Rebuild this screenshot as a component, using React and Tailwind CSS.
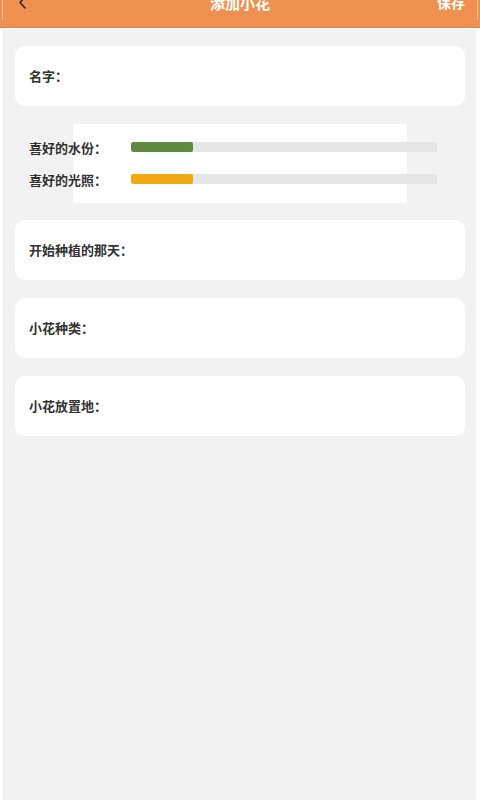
import React from "react";

const font = { fontFamily: '"Noto Sans CJK SC", "Noto Sans", sans-serif' };

function Card({ label }) {
  return (
    <div className="h-[60px] rounded-[10px] bg-white flex items-center pl-[14px]">
      <span className="text-[13px] font-semibold text-[#333333] leading-none -mt-[1px]">{label}</span>
    </div>
  );
}

function BarRow({ label, color }) {
  return (
    <div className="relative flex items-center h-[20px]">
      <span className="w-[102px] shrink-0 text-[13px] font-semibold text-[#333333] leading-none">{label}</span>
      <div className="flex-1 h-[10px] rounded-[2px] bg-[#e6e6e6] overflow-hidden">
        <div className={`h-full w-[62px] rounded-[2px] ${color}`} />
      </div>
    </div>
  );
}

export default function App() {
  return (
    <div className="min-h-[800px] bg-white flex flex-col" style={font}>
      <header className="h-[28px] bg-[#ee9150] border-b border-[#e6833e] overflow-hidden">
        <div className="mx-[2px] h-full border-x border-[#f6c29c] relative">
          <div className="-mt-[7px] h-[18px] flex items-center justify-between pl-[14px] pr-[12px]">
            <svg width="12" height="14" viewBox="0 0 12 14" fill="none" className="mt-[2px]">
              <path d="M8 1 L3 6.5 L8 12" stroke="#2b2b2b" strokeWidth="1.6" strokeLinecap="round" strokeLinejoin="round" />
            </svg>
            <span className="absolute left-1/2 -translate-x-1/2 text-[15px] font-bold text-white leading-none">添加小花</span>
            <span className="text-[14px] font-bold text-white leading-none">保存</span>
          </div>
        </div>
      </header>
      <main className="flex-1 mt-[1px] ml-[3px] mr-[4px] bg-[#f2f2f2] border-l border-[#e9e9e9] px-[11px] pt-[17px] flex flex-col">
        <Card label="名字：" />
        <section className="relative mt-[18px] pt-[13px] pb-[14px] pl-[14px] pr-[28px] flex flex-col gap-[12px]">
          <div className="absolute left-[58px] top-0 w-[334px] h-[79px] bg-white" />
          <BarRow label="喜好的水份：" color="bg-[#5e8b3f]" />
          <BarRow label="喜好的光照：" color="bg-[#f2a812]" />
        </section>
        <div className="mt-[17px] flex flex-col gap-[18px]">
          <Card label="开始种植的那天：" />
          <Card label="小花种类：" />
          <Card label="小花放置地：" />
        </div>
      </main>
    </div>
  );
}
